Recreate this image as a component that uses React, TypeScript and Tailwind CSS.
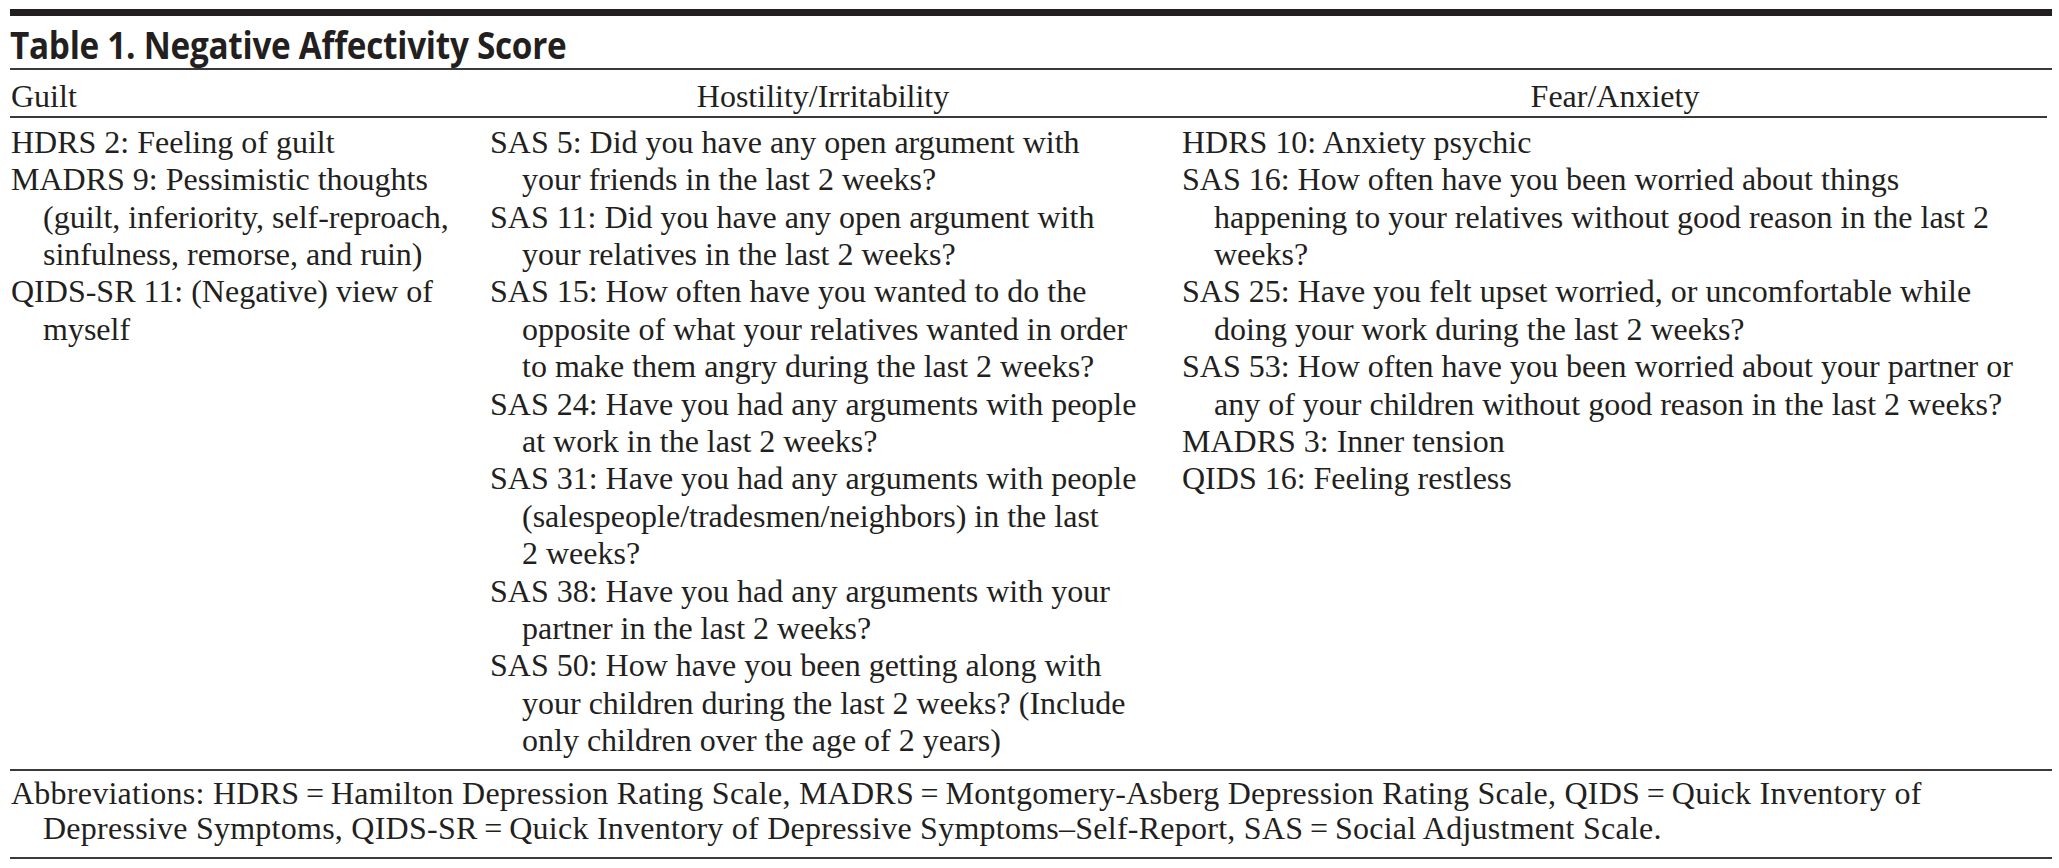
const guilt = [
  ["HDRS 2: Feeling of guilt"],
  ["MADRS 9: Pessimistic thoughts", "(guilt, inferiority, self-reproach,", "sinfulness, remorse, and ruin)"],
  ["QIDS-SR 11: (Negative) view of", "myself"],
];

const hostility = [
  ["SAS 5: Did you have any open argument with", "your friends in the last 2 weeks?"],
  ["SAS 11: Did you have any open argument with", "your relatives in the last 2 weeks?"],
  [
    "SAS 15: How often have you wanted to do the",
    "opposite of what your relatives wanted in order",
    "to make them angry during the last 2 weeks?",
  ],
  ["SAS 24: Have you had any arguments with people", "at work in the last 2 weeks?"],
  [
    "SAS 31: Have you had any arguments with people",
    "(salespeople/tradesmen/neighbors) in the last",
    "2 weeks?",
  ],
  ["SAS 38: Have you had any arguments with your", "partner in the last 2 weeks?"],
  [
    "SAS 50: How have you been getting along with",
    "your children during the last 2 weeks? (Include",
    "only children over the age of 2 years)",
  ],
];

const fear = [
  ["HDRS 10: Anxiety psychic"],
  [
    "SAS 16: How often have you been worried about things",
    "happening to your relatives without good reason in the last 2",
    "weeks?",
  ],
  ["SAS 25: Have you felt upset worried, or uncomfortable while", "doing your work during the last 2 weeks?"],
  [
    "SAS 53: How often have you been worried about your partner or",
    "any of your children without good reason in the last 2 weeks?",
  ],
  ["MADRS 3: Inner tension"],
  ["QIDS 16: Feeling restless"],
];

// hanging indent: first line flush, the rest pushed in
const Item = ({ lines }: { lines: string[] }) => (
  <div className="pl-[32px] indent-[-32px] whitespace-nowrap">
    {lines.map((l, i) => (
      <span key={i}>
        {l}
        {i < lines.length - 1 && <br />}
      </span>
    ))}
  </div>
);

export default function App() {
  return (
    <div className="bg-white w-[2059px] h-[868px] pt-[9px] text-[#231f20]">
      <div className="ml-[10px] w-[2042px]">
        {/* heavy top rule */}
        <div className="h-[7px] bg-[#231f20]" />

        <h1
          className="pt-[10px] pb-[4px] text-[37px] leading-[38px] font-bold tracking-[-0.3px] whitespace-nowrap origin-left scale-x-[0.9]"
          style={{ fontFamily: "'Open Sans', sans-serif" }}
        >
          Table 1. Negative Affectivity Score
        </h1>
        <div className="h-[2px] bg-[#3a3a3a]" />

        <div style={{ fontFamily: "'Liberation Serif', serif" }} className="text-[32px]">
          {/* column heads */}
          <div className="grid grid-cols-[480px_666px_1fr] pt-[8px] pb-[1px] leading-[36.7px]">
            <div className="pl-[1px]">Guilt</div>
            <div className="text-center">Hostility/Irritability</div>
            <div className="text-center pl-[22px]">Fear/Anxiety</div>
          </div>
          <div className="h-[2px] bg-[#3a3a3a] mr-[5px]" />

          {/* body */}
          <div className="grid grid-cols-[480px_666px_1fr] pt-[6px] pb-[9px] leading-[37.4px]">
            <div className="pl-[1px]">
              {guilt.map((g, i) => (
                <Item key={i} lines={g} />
              ))}
            </div>
            <div>
              {hostility.map((g, i) => (
                <Item key={i} lines={g} />
              ))}
            </div>
            <div className="pl-[26px]">
              {fear.map((g, i) => (
                <Item key={i} lines={g} />
              ))}
            </div>
          </div>
          <div className="h-[2px] bg-[#3a3a3a]" />

          {/* footnote */}
          <div className="pt-[5px] pb-[11px] pl-[1px] leading-[35px] tracking-[0.25px]">
            <Item
              lines={[
                "Abbreviations: HDRS\u2009=\u2009Hamilton Depression Rating Scale, MADRS\u2009=\u2009Montgomery-Asberg Depression Rating Scale, QIDS\u2009=\u2009Quick Inventory of",
                "Depressive Symptoms, QIDS-SR\u2009=\u2009Quick Inventory of Depressive Symptoms\u2013Self-Report, SAS\u2009=\u2009Social Adjustment Scale.",
              ]}
            />
          </div>
          <div className="h-[2px] bg-[#3a3a3a]" />
        </div>
      </div>
    </div>
  );
}
